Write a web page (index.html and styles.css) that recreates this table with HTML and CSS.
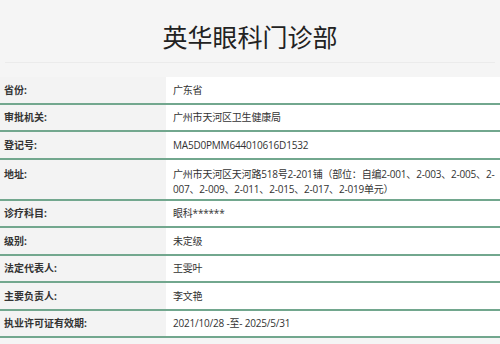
FILE: index.html
```html
<!DOCTYPE html>
<html lang="zh-CN">
<head>
<meta charset="utf-8">
<link rel="stylesheet" href="styles.css">
</head>
<body>
<header class="head">
  <h1 class="title">英华眼科门诊部</h1>
</header>
<div class="info">
  <div class="row"><div class="label">省份:</div><div class="value">广东省</div></div>
  <div class="row"><div class="label">审批机关:</div><div class="value">广州市天河区卫生健康局</div></div>
  <div class="row"><div class="label">登记号:</div><div class="value">MA5D0PMM644010616D1532</div></div>
  <div class="row row-tall"><div class="label">地址:</div><div class="value">广州市天河区天河路518号2-201铺（部位：自编2-001、2-003、2-005、2-007、2-009、2-011、2-015、2-017、2-019单元）</div></div>
  <div class="row"><div class="label">诊疗科目:</div><div class="value">眼科******</div></div>
  <div class="row"><div class="label">级别:</div><div class="value">未定级</div></div>
  <div class="row"><div class="label">法定代表人:</div><div class="value">王雯叶</div></div>
  <div class="row"><div class="label">主要负责人:</div><div class="value">李文艳</div></div>
  <div class="row"><div class="label">执业许可证有效期:</div><div class="value">2021/10/28 -至- 2025/5/31</div></div>
</div>
</body>
</html>
```
FILE: styles.css
```css
html, body {
  margin: 0;
  padding: 0;
}
body {
  background: #f5f5f5;
  font-family: "Open Sans", "Noto Sans CJK SC", sans-serif;
  color: #333;
  font-size: 10px;
}
.head {
  margin: 0 5px;
  padding: 24px 0 13px;
  border-bottom: 1px solid #ebebeb;
}
.title {
  margin: 0;
  text-align: center;
  font-family: "Noto Sans CJK SC", sans-serif;
  font-size: 25px;
  line-height: 25px;
  font-weight: 400;
  color: #222;
}
.info {
  margin-top: 14px;
}
.row {
  display: grid;
  grid-template-columns: 166px 1fr;
  border-bottom: 2px solid #72a78e;
}
.label {
  padding: 5.5px 0 5px 4px;
  line-height: 15px;
  font-weight: 700;
  color: #333;
  background: #f3f3f3;
}
.value {
  padding: 5.5px 0 5px 7px;
  line-height: 15px;
  letter-spacing: -0.2px;
  background: #fff;
  color: #333;
}
.row-tall .label,
.row-tall .value {
  padding-top: 7px;
  padding-bottom: 2px;
}
```
